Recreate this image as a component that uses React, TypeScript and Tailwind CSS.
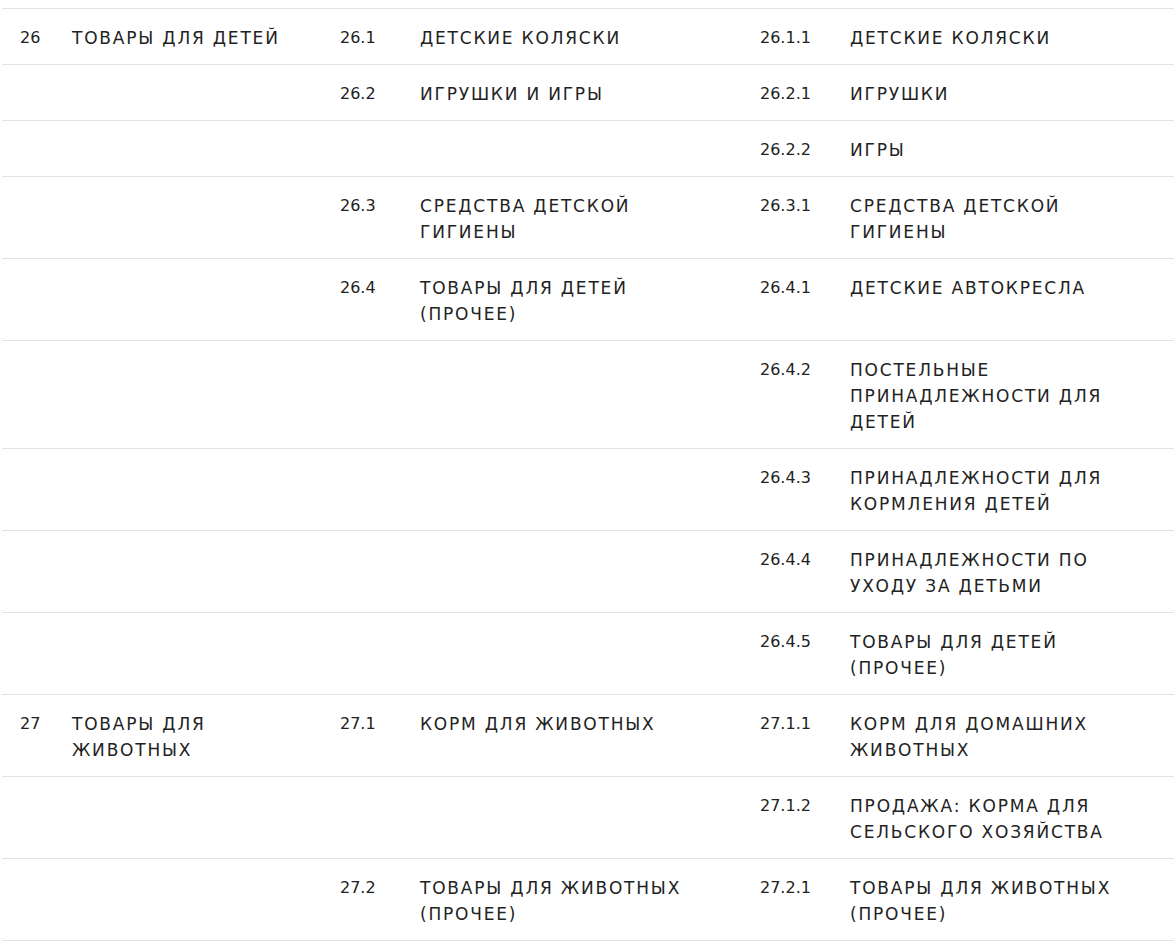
type Row = [string, string, string, string, string, string];

// categories, one line per row; \n marks where the name wraps
const rows: Row[] = [
  ["26", "ТОВАРЫ ДЛЯ ДЕТЕЙ", "26.1", "ДЕТСКИЕ КОЛЯСКИ", "26.1.1", "ДЕТСКИЕ КОЛЯСКИ"],
  ["", "", "26.2", "ИГРУШКИ И ИГРЫ", "26.2.1", "ИГРУШКИ"],
  ["", "", "", "", "26.2.2", "ИГРЫ"],
  ["", "", "26.3", "СРЕДСТВА ДЕТСКОЙ\nГИГИЕНЫ", "26.3.1", "СРЕДСТВА ДЕТСКОЙ\nГИГИЕНЫ"],
  ["", "", "26.4", "ТОВАРЫ ДЛЯ ДЕТЕЙ\n(ПРОЧЕЕ)", "26.4.1", "ДЕТСКИЕ АВТОКРЕСЛА"],
  ["", "", "", "", "26.4.2", "ПОСТЕЛЬНЫЕ\nПРИНАДЛЕЖНОСТИ ДЛЯ\nДЕТЕЙ"],
  ["", "", "", "", "26.4.3", "ПРИНАДЛЕЖНОСТИ ДЛЯ\nКОРМЛЕНИЯ ДЕТЕЙ"],
  ["", "", "", "", "26.4.4", "ПРИНАДЛЕЖНОСТИ ПО\nУХОДУ ЗА ДЕТЬМИ"],
  ["", "", "", "", "26.4.5", "ТОВАРЫ ДЛЯ ДЕТЕЙ\n(ПРОЧЕЕ)"],
  ["27", "ТОВАРЫ ДЛЯ\nЖИВОТНЫХ", "27.1", "КОРМ ДЛЯ ЖИВОТНЫХ", "27.1.1", "КОРМ ДЛЯ ДОМАШНИХ\nЖИВОТНЫХ"],
  ["", "", "", "", "27.1.2", "ПРОДАЖА: КОРМА ДЛЯ\nСЕЛЬСКОГО ХОЗЯЙСТВА"],
  ["", "", "27.2", "ТОВАРЫ ДЛЯ ЖИВОТНЫХ\n(ПРОЧЕЕ)", "27.2.1", "ТОВАРЫ ДЛЯ ЖИВОТНЫХ\n(ПРОЧЕЕ)"],
];

const name = "whitespace-pre-line text-[17px] tracking-[1.8px]";

export default function App() {
  return (
    <div className="min-h-screen bg-white pt-[8px] text-[16px] leading-[26px] text-[#222222] font-['DejaVu_Sans',sans-serif]">
      <div className="mx-[2px] border-b border-[#e2e2e2]">
        {rows.map((row, i) => (
          <div
            key={i}
            className="grid grid-cols-[52px_268px_80px_340px_90px_1fr] border-t border-[#e2e2e2] pl-[18px] pt-[16px] pb-[13px]"
          >
            <div>{row[0]}</div>
            <div className={name}>{row[1]}</div>
            <div>{row[2]}</div>
            <div className={name}>{row[3]}</div>
            <div>{row[4]}</div>
            <div className={name}>{row[5]}</div>
          </div>
        ))}
      </div>
    </div>
  );
}
